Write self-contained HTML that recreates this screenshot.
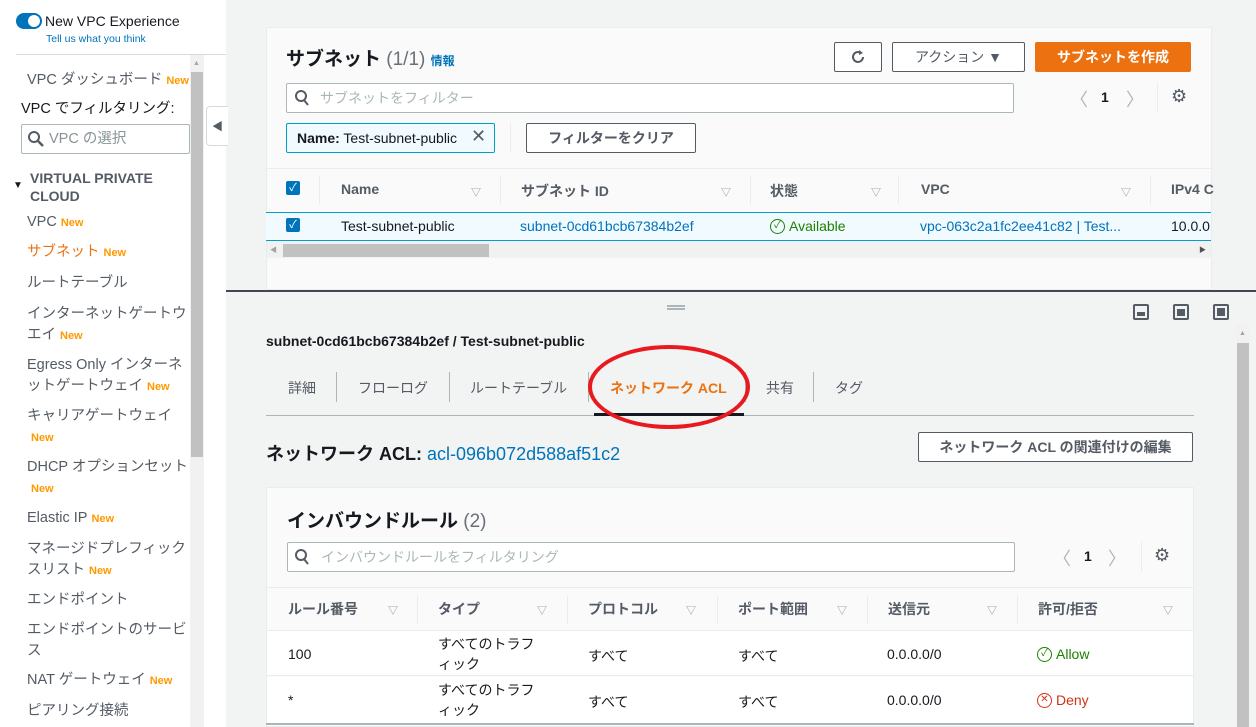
<!DOCTYPE html>
<html><head><meta charset="utf-8">
<style>
*{box-sizing:border-box;margin:0;padding:0}
body{width:1256px;height:727px;overflow:hidden;background:#f2f3f3;font-family:"Liberation Sans","Noto Sans CJK JP",sans-serif;font-size:14px;color:#16191f;position:relative}
.a{position:absolute;white-space:nowrap}
.new{color:#ff9900;font-size:11px;font-weight:bold;margin-left:4px}
.sb{color:#545b64;font-size:14.5px;line-height:20px}
.link{color:#0073bb}
.btn{position:absolute;border:1px solid #545b64;background:#fff;border-radius:2px;font-weight:bold;color:#545b64;text-align:center;font-size:14px}
.tri{color:#879596;font-size:10px}
.hd{font-weight:bold;color:#545b64}
.sep{position:absolute;width:1px;background:#eaeded}
.st{display:flex;align-items:center;gap:4px}
.ic{display:inline-block;width:15px;height:15px;border:1.5px solid currentColor;border-radius:50%;font-size:10px;text-align:center;line-height:12px}
</style></head><body>
<!-- sidebar -->
<div class="a" style="left:0;top:0;width:204px;height:727px;background:#fff"></div>
<div class="a" style="left:204px;top:0;width:22px;height:727px;background:#fff"></div>
<div class="a" style="left:16px;top:13px;width:26px;height:16px;border-radius:8px;background:#0073bb"></div>
<div class="a" style="left:28px;top:15px;width:12px;height:12px;border-radius:6px;background:#fff"></div>
<div class="a" style="left:45px;top:13px;font-size:14px;color:#16191f">New VPC Experience</div>
<div class="a" style="left:46px;top:33px;font-size:10.5px;color:#0073bb">Tell us what you think</div>
<div class="a" style="left:16px;top:54px;width:210px;height:1px;background:#d5dbdb"></div>
<div class="a" style="left:190px;top:55px;width:14px;height:672px;background:#f1f1f1"></div>
<div class="a" style="left:191px;top:72px;width:12px;height:385px;background:#c1c1c1"></div>
<div class="a" style="left:193px;top:60px;font-size:7px;color:#a3a3a3">▲</div>
<div class="a" style="left:206px;top:106px;width:22px;height:40px;border:1px solid #d5dbdb;border-right:none;border-radius:4px 0 0 4px;background:#fff"></div>
<div class="a" style="left:212px;top:118px;font-size:11px;color:#545b64">◀</div>
<div class="a sb" style="left:27px;top:70px">VPC ダッシュボード<span class="new">New</span></div>
<div class="a sb" style="left:21px;top:99px;color:#16191f">VPC でフィルタリング:</div>
<div class="a" style="left:21px;top:124px;width:169px;height:30px;border:1px solid #aab7b8;border-radius:2px"></div>
<svg class="a" style="left:27px;top:130px" width="18" height="18" viewBox="0 0 18 18"><circle cx="7" cy="7" r="5" fill="none" stroke="#545b64" stroke-width="2"/><path d="M11 11l5 5" stroke="#545b64" stroke-width="2.5"/></svg>
<div class="a sb" style="left:49px;top:129px;color:#879596">VPC の選択</div>
<div class="a" style="left:13px;top:180px;font-size:10px;color:#16191f">▼</div>
<div class="a" style="left:30px;top:169px;font-weight:bold;color:#545b64;font-size:14px;line-height:18px;white-space:normal;width:160px">VIRTUAL PRIVATE CLOUD</div>
<div class="a sb" style="left:27px;top:212px">VPC<span class="new">New</span></div>
<div class="a sb" style="left:27px;top:242px;color:#ec7211">サブネット<span class="new">New</span></div>
<div class="a sb" style="left:27px;top:273px">ルートテーブル</div>
<div class="a sb" style="left:27px;top:304px;line-height:21px">インターネットゲートウ<br>エイ<span class="new">New</span></div>
<div class="a sb" style="left:27px;top:355px;line-height:21px">Egress Only インターネ<br>ットゲートウェイ<span class="new">New</span></div>
<div class="a sb" style="left:27px;top:406px;line-height:21px">キャリアゲートウェイ<br><span class="new">New</span></div>
<div class="a sb" style="left:27px;top:457px;line-height:21px">DHCP オプションセット<br><span class="new">New</span></div>
<div class="a sb" style="left:27px;top:508px">Elastic IP<span class="new">New</span></div>
<div class="a sb" style="left:27px;top:539px;line-height:21px">マネージドプレフィック<br>スリスト<span class="new">New</span></div>
<div class="a sb" style="left:27px;top:590px">エンドポイント</div>
<div class="a sb" style="left:27px;top:620px;line-height:21px">エンドポイントのサービ<br>ス</div>
<div class="a sb" style="left:27px;top:670px">NAT ゲートウェイ<span class="new">New</span></div>
<div class="a sb" style="left:27px;top:701px">ピアリング接続</div>

<!-- top card -->
<div class="a" style="left:266px;top:27px;width:946px;height:263px;background:#fafafa;border:1px solid #eaeded"></div>
<div class="a" style="left:286px;top:44px;font-size:19px;font-weight:bold">サブネット <span style="font-weight:normal;color:#687078">(1/1)</span> <span class="link" style="font-size:12px;font-weight:bold">情報</span></div>
<div class="btn" style="left:834px;top:42px;width:48px;height:30px"></div>
<svg class="a" style="left:849px;top:48px" width="18" height="18" viewBox="0 0 18 18"><path d="M14 9a5 5 0 1 1-2-4" fill="none" stroke="#545b64" stroke-width="2"/><path d="M10 2l4 3-4 2" fill="#545b64"/></svg>
<div class="btn" style="left:892px;top:42px;width:133px;height:30px;line-height:28px;font-weight:normal">アクション ▼</div>
<div class="a" style="left:1035px;top:42px;width:156px;height:30px;background:#ec7211;color:#fff;font-weight:bold;text-align:center;line-height:30px;border-radius:2px">サブネットを作成</div>
<div class="a" style="left:286px;top:83px;width:728px;height:30px;background:#fff;border:1px solid #aab7b8;border-radius:2px"></div>
<svg class="a" style="left:294px;top:89px" width="16" height="18" viewBox="0 0 16 18"><circle cx="7" cy="7" r="5" fill="none" stroke="#545b64" stroke-width="2"/><path d="M10 11l4 5" stroke="#545b64" stroke-width="2"/></svg>
<div class="a" style="left:320px;top:88px;color:#aab7b8">サブネットをフィルター</div>
<div class="a" style="left:1070px;top:86px;font-size:18px;color:#aab7b8">〈</div>
<div class="a" style="left:1101px;top:89px;font-weight:bold">1</div>
<div class="a" style="left:1126px;top:86px;font-size:18px;color:#aab7b8">〉</div>
<div class="sep" style="left:1157px;top:83px;height:30px"></div>
<div class="a" style="left:1171px;top:86px;font-size:18px;color:#545b64">⚙</div>
<div class="a" style="left:286px;top:123px;width:209px;height:30px;background:#f1faff;border:1px solid #00a1c9;border-radius:2px;padding:6px 10px;font-size:14px"><b>Name:</b> Test-subnet-public</div>
<div class="a" style="left:471px;top:126px;font-size:18px;color:#545b64">✕</div>
<div class="sep" style="left:510px;top:123px;height:30px"></div>
<div class="btn" style="left:526px;top:123px;width:170px;height:30px;line-height:28px">フィルターをクリア</div>
<div class="a" style="left:267px;top:168px;width:944px;height:1px;background:#eaeded"></div>
<div class="a" style="left:286px;top:181px;width:14px;height:14px;background:#0073bb;border-radius:2px;color:#fff;font-size:11px;text-align:center;line-height:14px">✓</div>
<div class="a hd" style="left:341px;top:181px">Name</div><div class="a tri" style="left:471px;top:184px">▽</div>
<div class="a hd" style="left:521px;top:181px">サブネット ID</div><div class="a tri" style="left:721px;top:184px">▽</div>
<div class="a hd" style="left:770px;top:181px">状態</div><div class="a tri" style="left:871px;top:184px">▽</div>
<div class="a hd" style="left:921px;top:181px">VPC</div><div class="a tri" style="left:1121px;top:184px">▽</div>
<div class="a hd" style="left:1171px;top:181px">IPv4 C</div>
<div class="sep" style="left:319px;top:176px;height:28px"></div>
<div class="sep" style="left:500px;top:176px;height:28px"></div>
<div class="sep" style="left:750px;top:176px;height:28px"></div>
<div class="sep" style="left:898px;top:176px;height:28px"></div>
<div class="sep" style="left:1150px;top:176px;height:28px"></div>
<div class="a" style="left:266px;top:212px;width:945px;height:29px;background:#f1faff;border-top:1px solid #00a1c9;border-bottom:1px solid #00a1c9"></div>
<div class="a" style="left:286px;top:218px;width:14px;height:14px;background:#0073bb;border-radius:2px;color:#fff;font-size:11px;text-align:center;line-height:14px">✓</div>
<div class="a" style="left:341px;top:218px">Test-subnet-public</div>
<div class="a link" style="left:520px;top:218px">subnet-0cd61bcb67384b2ef</div>
<div class="a st" style="left:770px;top:218px;color:#1d8102"><span class="ic">✓</span>Available</div>
<div class="a link" style="left:920px;top:218px">vpc-063c2a1fc2ee41c82 | Test...</div>
<div class="a" style="left:1171px;top:218px">10.0.0</div>
<div class="a" style="left:267px;top:241px;width:944px;height:17px;background:#f1f1f1"></div>
<div class="a" style="left:283px;top:244px;width:206px;height:13px;background:#c1c1c1"></div>
<div class="a" style="left:270px;top:245px;font-size:7px;color:#a3a3a3">◀</div>
<div class="a" style="left:1199px;top:245px;font-size:7px;color:#505050">▶</div>
<div class="a" style="left:226px;top:290px;width:1030px;height:2px;background:#414750"></div>

<!-- bottom -->
<div class="a" style="left:667px;top:305px;width:18px;height:5px;border-top:2px solid #aab7b8;border-bottom:2px solid #aab7b8"></div>
<div class="a" style="left:1133px;top:304px;width:16px;height:16px;border:2px solid #545b64;border-radius:2px"><div style="position:absolute;left:2px;right:2px;bottom:2px;height:4px;background:#545b64"></div></div>
<div class="a" style="left:1173px;top:304px;width:16px;height:16px;border:2px solid #545b64;border-radius:2px"><div style="position:absolute;left:2px;right:2px;bottom:2px;height:7px;background:#545b64"></div></div>
<div class="a" style="left:1213px;top:304px;width:16px;height:16px;border:2px solid #545b64;border-radius:2px"><div style="position:absolute;left:2px;right:2px;bottom:2px;top:2px;background:#545b64"></div></div>
<div class="a" style="left:1236px;top:325px;width:14px;height:402px;background:#f1f1f1"></div>
<div class="a" style="left:1237px;top:343px;width:12px;height:384px;background:#c1c1c1"></div>
<div class="a" style="left:1239px;top:330px;font-size:7px;color:#a3a3a3">▲</div>
<div class="a" style="left:266px;top:333px;font-weight:bold">subnet-0cd61bcb67384b2ef / Test-subnet-public</div>
<div class="a" style="left:288px;top:378px;color:#545b64">詳細</div>
<div class="sep" style="left:336px;top:372px;height:30px;background:#aab7b8"></div>
<div class="a" style="left:358px;top:378px;color:#545b64">フローログ</div>
<div class="sep" style="left:449px;top:372px;height:30px;background:#aab7b8"></div>
<div class="a" style="left:470px;top:378px;color:#545b64">ルートテーブル</div>
<div class="sep" style="left:588px;top:372px;height:30px;background:#aab7b8"></div>
<div class="a" style="left:610px;top:378px;color:#ec7211;font-weight:bold">ネットワーク ACL</div>
<div class="sep" style="left:745px;top:372px;height:30px;background:#aab7b8"></div>
<div class="a" style="left:766px;top:378px;color:#545b64">共有</div>
<div class="sep" style="left:813px;top:372px;height:30px;background:#aab7b8"></div>
<div class="a" style="left:835px;top:378px;color:#545b64">タグ</div>
<div class="a" style="left:266px;top:415px;width:928px;height:1px;background:#aab7b8"></div>
<div class="a" style="left:594px;top:413px;width:150px;height:3px;background:#16191f"></div>
<div class="a" style="left:588px;top:345px;width:162px;height:84px;border:4px solid #e8191f;border-radius:50%"></div>
<div class="a" style="left:266px;top:440px;font-size:18px;font-weight:bold">ネットワーク ACL: <span class="link" style="font-weight:normal">acl-096b072d588af51c2</span></div>
<div class="btn" style="left:918px;top:432px;width:275px;height:30px;line-height:28px">ネットワーク ACL の関連付けの編集</div>

<div class="a" style="left:266px;top:487px;width:928px;height:240px;background:#fafafa;border:1px solid #eaeded"></div>
<div class="a" style="left:287px;top:506px;font-size:19px;font-weight:bold">インバウンドルール <span style="font-weight:normal;color:#687078">(2)</span></div>
<div class="a" style="left:287px;top:542px;width:728px;height:30px;background:#fff;border:1px solid #aab7b8;border-radius:2px"></div>
<svg class="a" style="left:294px;top:548px" width="16" height="18" viewBox="0 0 16 18"><circle cx="7" cy="7" r="5" fill="none" stroke="#545b64" stroke-width="2"/><path d="M10 11l4 5" stroke="#545b64" stroke-width="2"/></svg>
<div class="a" style="left:321px;top:547px;color:#aab7b8">インバウンドルールをフィルタリング</div>
<div class="a" style="left:1053px;top:545px;font-size:18px;color:#aab7b8">〈</div>
<div class="a" style="left:1084px;top:548px;font-weight:bold">1</div>
<div class="a" style="left:1108px;top:545px;font-size:18px;color:#aab7b8">〉</div>
<div class="sep" style="left:1141px;top:542px;height:30px"></div>
<div class="a" style="left:1154px;top:545px;font-size:18px;color:#545b64">⚙</div>
<div class="a" style="left:267px;top:587px;width:926px;height:1px;background:#eaeded"></div>
<div class="a hd" style="left:288px;top:599px">ルール番号</div><div class="a tri" style="left:388px;top:602px">▽</div>
<div class="a hd" style="left:438px;top:599px">タイプ</div><div class="a tri" style="left:537px;top:602px">▽</div>
<div class="a hd" style="left:588px;top:599px">プロトコル</div><div class="a tri" style="left:686px;top:602px">▽</div>
<div class="a hd" style="left:738px;top:599px">ポート範囲</div><div class="a tri" style="left:837px;top:602px">▽</div>
<div class="a hd" style="left:888px;top:599px">送信元</div><div class="a tri" style="left:987px;top:602px">▽</div>
<div class="a hd" style="left:1038px;top:599px">許可/拒否</div><div class="a tri" style="left:1163px;top:602px">▽</div>
<div class="sep" style="left:417px;top:596px;height:28px"></div>
<div class="sep" style="left:567px;top:596px;height:28px"></div>
<div class="sep" style="left:717px;top:596px;height:28px"></div>
<div class="sep" style="left:867px;top:596px;height:28px"></div>
<div class="sep" style="left:1017px;top:596px;height:28px"></div>
<div class="a" style="left:267px;top:630px;width:926px;height:46px;background:#fff;border-top:1px solid #eaeded;border-bottom:1px solid #eaeded"></div>
<div class="a" style="left:267px;top:677px;width:926px;height:46px;background:#fff"></div>
<div class="a" style="left:288px;top:646px">100</div>
<div class="a" style="left:438px;top:634px;line-height:20px">すべてのトラフ<br>ィック</div>
<div class="a" style="left:588px;top:646px">すべて</div>
<div class="a" style="left:738px;top:646px">すべて</div>
<div class="a" style="left:887px;top:646px">0.0.0.0/0</div>
<div class="a st" style="left:1037px;top:646px;color:#1d8102"><span class="ic">✓</span>Allow</div>
<div class="a" style="left:288px;top:692px">*</div>
<div class="a" style="left:438px;top:680px;line-height:20px">すべてのトラフ<br>ィック</div>
<div class="a" style="left:588px;top:692px">すべて</div>
<div class="a" style="left:738px;top:692px">すべて</div>
<div class="a" style="left:887px;top:692px">0.0.0.0/0</div>
<div class="a st" style="left:1037px;top:692px;color:#d13212"><span class="ic">✕</span>Deny</div>
<div class="a" style="left:266px;top:723px;width:928px;height:2px;background:#aab7b8"></div>
</body></html>
